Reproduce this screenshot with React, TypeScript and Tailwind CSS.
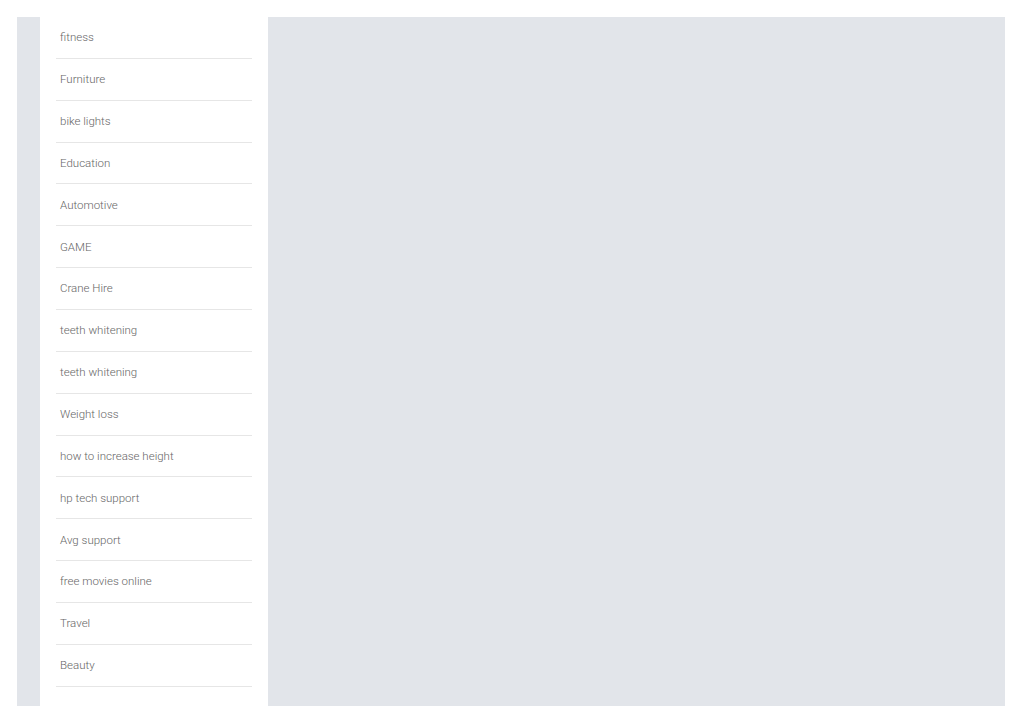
import React from 'react';

const categories = [
  'fitness',
  'Furniture',
  'bike lights',
  'Education',
  'Automotive',
  'GAME',
  'Crane Hire',
  'teeth whitening',
  'teeth whitening',
  'Weight loss',
  'how to increase height',
  'hp tech support',
  'Avg support',
  'free movies online',
  'Travel',
  'Beauty',
];

export default function App() {
  return (
    <div className="min-h-[723px] bg-white pt-[17px] pl-[17px] pr-[19px] font-['Roboto',sans-serif]">
      <div className="flex h-[689px] bg-[#e2e5ea]">
        <div className="ml-[23px] w-[228px] bg-white px-4">
          <ul>
            {categories.map((c, i) => (
              <li
                key={i}
                className="flex h-[41.87px] items-center border-b border-[#e6e6e6] pt-[1px] pl-1 text-[11.5px] font-light text-[#666]"
              >
                {c}
              </li>
            ))}
          </ul>
        </div>
        <div className="flex-1" />
      </div>
    </div>
  );
}
